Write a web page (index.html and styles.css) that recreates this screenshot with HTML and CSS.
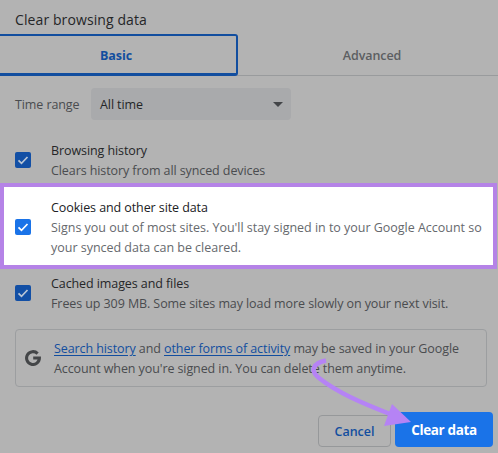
FILE: index.html
```
<!DOCTYPE html>
<html lang="en">
<head>
<meta charset="utf-8">
<title>Clear browsing data</title>
<link rel="stylesheet" href="styles.css">
</head>
<body>
<main class="dialog">
  <h1 class="title">Clear browsing data</h1>
  <nav class="tabs">
    <div class="tab tab-active">Basic</div>
    <div class="tab">Advanced</div>
  </nav>
  <div class="range">
    <span class="range-label">Time range</span>
    <div class="select"><span>All time</span><svg width="10" height="5" viewBox="0 0 10 5"><path d="M0 0h10L5 5z" fill="#434548"/></svg></div>
  </div>
  <section class="option first">
    <span class="check"><svg viewBox="0 0 16 16"><path d="M3.5 8.3l3 3 6-6.3"/></svg></span>
    <div><div class="name">Browsing history</div><div class="desc">Clears history from all synced devices</div></div>
  </section>
  <section class="option highlight">
    <span class="check"><svg viewBox="0 0 16 16"><path d="M3.5 8.3l3 3 6-6.3"/></svg></span>
    <div class="copy"><div class="name">Cookies and other site data</div><div class="desc">Signs you out of most sites. You'll stay signed in to your Google Account so<br>your synced data can be cleared.</div></div>
  </section>
  <section class="option last">
    <span class="check"><svg viewBox="0 0 16 16"><path d="M3.5 8.3l3 3 6-6.3"/></svg></span>
    <div><div class="name">Cached images and files</div><div class="desc">Frees up 309 MB. Some sites may load more slowly on your next visit.</div></div>
  </section>
  <aside class="info">
    <svg class="google" width="16" height="16" viewBox="0 0 16 16"><path d="M12.6 3.6A6.4 6.4 0 1 0 14.4 8H8.2" fill="none" stroke="#444648" stroke-width="3.1"/></svg>
    <p><a>Search history</a> and <a>other forms of activity</a> may be saved in your Google<br>Account when you're signed in. You can delete them anytime.</p>
  </aside>
  <footer class="actions">
    <div class="button cancel">Cancel</div>
    <div class="button clear">Clear data</div>
  </footer>
  <svg class="arrow" width="120" height="80" viewBox="0 0 120 80"><path d="M16 10.500C4 13 -1 20 9 28C28 43 52 53 80 64" fill="none" stroke="#b583f5" stroke-width="4.500"/><path d="M82 54L101 72L74 76z" fill="#b583f5"/></svg>
</main>
</body>
</html>
```
FILE: styles.css
```
* { box-sizing: border-box; }
body { margin: 0; background: #b3b3b3; font: 12.5px/20px "Open Sans", "Noto Sans", sans-serif; letter-spacing: -0.09px; color: #4a4c4f; white-space: nowrap; }
.dialog { position: relative; width: 498px; height: 453px; overflow: hidden; }
.title { margin: 0; height: 34px; padding: 9px 15px 0; font-size: 14px; line-height: 22px; font-weight: 400; letter-spacing: 0.1px; color: #252628; }
.tabs { display: flex; height: 42px; background: linear-gradient(#999b9d, #999b9d) 0 41px / 100% 1px no-repeat; }
.tab { flex: 1; display: flex; align-items: center; justify-content: center; padding: 2px 0 0 8px; font-weight: 600; color: #5c5e61; }
.tab-active { flex: 0 0 238px; padding: 2px 4px 0 0; border: 2px solid #124e9f; border-left: 0; border-bottom-width: 3px; border-radius: 0 3px 3px 0; color: #124e9f; font-weight: 700; }
.range { display: flex; align-items: center; margin-top: 12px; height: 32px; padding-left: 15px; }
.range-label { width: 76px; padding-top: 2px; letter-spacing: -0.1px; }
.select { width: 200px; height: 32px; padding: 0 8px 0 9px; display: flex; align-items: center; justify-content: space-between; background: #a9aaac; border-radius: 4px; color: #252628; }
.select span { padding-top: 2px; }
.option { display: flex; align-items: center; gap: 20px; padding-left: 15px; }
.first { height: 40px; margin-top: 20px; }
.first .name, .first .desc, .last .name, .last .desc { padding-top: 1px; line-height: 19px; }
.highlight { width: 497px; height: 86px; margin-top: 3px; padding-left: 11px; border: 4px solid #b583e7; background: #fff; }
.copy { padding-top: 4px; }
.last { height: 40px; margin-top: 4px; }
.name { color: #252628; }
.highlight .name { color: #202124; }
.highlight .desc { color: #66696d; letter-spacing: -0.02px; }
.check { width: 16px; height: 16px; flex: none; background: #124fa5; border-radius: 2px; }
.check svg { display: block; fill: none; stroke: #b9c5d5; stroke-width: 1.7; }
.highlight .check { background: #1a73e8; }
.highlight .check svg { stroke: #fff; }
.highlight .check { margin-top: 2px; }
.info { display: flex; align-items: center; gap: 13px; width: 472px; height: 58px; margin: 16px 0 0 15px; padding-left: 9px; border: 1px solid #9c9ea0; border-radius: 4px; }
.info p { margin: 0; padding-top: 2px; }
.info a { color: #124e9f; text-decoration: underline; text-underline-offset: 2px; }
.actions { display: flex; justify-content: flex-end; align-items: flex-end; gap: 4px; margin-top: 25px; padding-right: 5px; height: 35px; }
.button { display: flex; align-items: center; justify-content: center; border-radius: 4px; font-weight: 600; }
.cancel { width: 73px; height: 32px; padding-top: 2px; border: 1px solid #96989a; color: #124e9f; letter-spacing: 0; }
.clear { width: 98px; height: 35px; padding-top: 1px; background: #1a73e8; color: #fff; font-size: 13.5px; letter-spacing: -0.35px; font-weight: 700; }
.arrow { position: absolute; left: 310px; top: 350px; }
```
